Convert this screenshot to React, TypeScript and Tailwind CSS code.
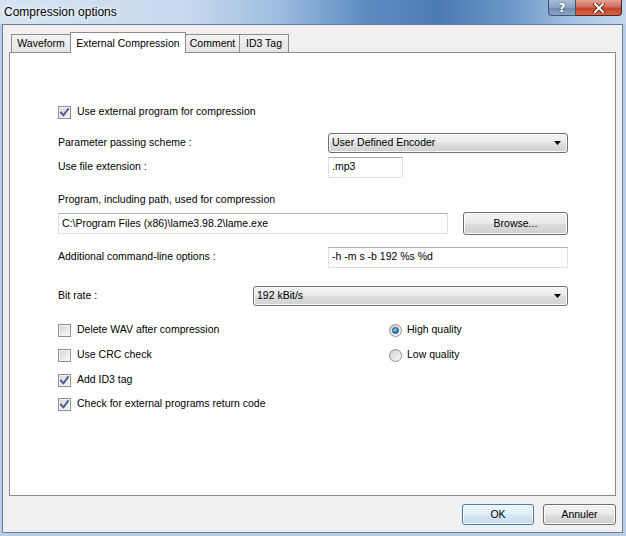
import React from "react";

const font = { fontFamily: '"Liberation Sans", Arial, sans-serif' };

function CheckBox({ checked }: { checked: boolean }) {
  return (
    <span className="w-[13px] h-[13px] shrink-0 border border-[#8e8f8f] bg-[linear-gradient(135deg,#d4d4d4,#f9f9f9)] flex items-center justify-center shadow-[inset_0_0_0_1px_#f4f4f4]">
      {checked && (
        <svg width="11" height="11" viewBox="0 0 11 11">
          <path d="M2 5.6 L4.4 8.3 L9 2.2" fill="none" stroke="#3d4f8a" strokeWidth="1.9" strokeLinecap="square" />
          <path d="M2.6 5.6 L4.4 7.6 L8.6 2.6" fill="none" stroke="#6f86c6" strokeWidth="0.6" />
        </svg>
      )}
    </span>
  );
}

function Radio({ checked }: { checked: boolean }) {
  return (
    <span className="w-[13px] h-[13px] shrink-0 rounded-full border border-[#8e8f8f] bg-[linear-gradient(135deg,#d0d0d0,#fafafa)] flex items-center justify-center">
      {checked && (
        <span className="w-[7px] h-[7px] rounded-full bg-[radial-gradient(circle_at_40%_35%,#9fe0fb,#2a85c4_55%,#174f82)] border border-[#1d4f7e]" />
      )}
    </span>
  );
}

function Select({ value, w }: { value: string; w: string }) {
  return (
    <div className={`${w} h-[20px] rounded-[3px] border border-[#707070] bg-[linear-gradient(#f3f3f3,#ebebeb_45%,#dedede_50%,#d2d2d2)] shadow-[inset_0_0_0_1px_#fbfbfb] flex items-center justify-between pl-[3px] pr-[5px]`}>
      <span>{value}</span>
      <svg width="8" height="5" viewBox="0 0 8 5">
        <path d="M0 0 H7 L3.5 4 Z" fill="#000" />
      </svg>
    </div>
  );
}

function Input({ value, w }: { value: string; w: string }) {
  return (
    <div className={`${w} h-[21px] border border-[#dbdfe6] border-t-[#abadb3] bg-white flex items-center pl-[3px]`}>
      <span>{value}</span>
    </div>
  );
}

function Button({ label, w, def }: { label: string; w: string; def?: boolean }) {
  const cls = def
    ? "border-[#3c7fb1] bg-[linear-gradient(#eef5fb,#e2eef8_48%,#d3e6f4_52%,#c7dff0)]"
    : "border-[#707070] bg-[linear-gradient(#f2f2f2,#ebebeb_48%,#dddddd_52%,#cfcfcf)]";
  return (
    <div className={`${w} rounded-[3px] border ${cls} shadow-[inset_0_0_0_1px_#fbfbfb] flex items-center justify-center text-black`}>
      {label}
    </div>
  );
}

function CheckRow({ checked, label, mt }: { checked: boolean; label: string; mt: string }) {
  return (
    <div className={`h-[22px] flex items-center gap-[6px] ${mt}`}>
      <CheckBox checked={checked} />
      <span>{label}</span>
    </div>
  );
}

function RadioRow({ checked, label, mt }: { checked: boolean; label: string; mt: string }) {
  return (
    <div className={`h-[22px] flex items-center gap-[5px] ${mt}`}>
      <Radio checked={checked} />
      <span>{label}</span>
    </div>
  );
}

export default function App() {
  return (
    <div className="w-[626px] h-[536px] overflow-hidden bg-[#b7cfea] flex flex-col text-[10.5px] text-black" style={font}>
      {/* Title bar */}
      <div className="h-[24px] shrink-0 flex items-start justify-between bg-[linear-gradient(90deg,#d6e3f2_0%,#c8d9ee_30%,#9bbbe0_45%,#5f8dc2_58%,#4b7bb3_70%,#6d98c8_82%,#a7c4e5_92%,#c2d7ee_100%)]">
        <div className="pl-[4px] pt-[3px] text-[12px] text-black [text-shadow:0_0_6px_#ffffff,0_0_3px_#ffffff]">Compression options</div>
        <div className="flex mr-[4px]">
          <div className="w-[28px] h-[16px] border border-[#3e5370] border-t-0 rounded-bl-[4px] bg-[linear-gradient(#a9bdd6,#8aa3c2_50%,#6f8bb0_51%,#8ba6c7)] flex items-center justify-center">
            <span className="text-white font-bold text-[12px] leading-none [text-shadow:0_0_2px_#1f2f45]" style={{ fontFamily: '"DejaVu Sans", sans-serif' }}>?</span>
          </div>
          <div className="w-[46px] h-[16px] border border-[#5a1f1a] border-t-0 border-l-0 rounded-br-[4px] bg-[linear-gradient(#e3a193,#d0705d_45%,#c2442b_55%,#d4664c)] flex items-center justify-center">
            <svg width="12" height="10" viewBox="0 0 12 10">
              <path d="M2 1 L10 9 M10 1 L2 9" stroke="#3a1510" strokeWidth="3.4" strokeLinecap="square" />
              <path d="M2 1 L10 9 M10 1 L2 9" stroke="#ffffff" strokeWidth="2" strokeLinecap="square" />
            </svg>
          </div>
        </div>
      </div>

      {/* Client area */}
      <div className="ml-[2px] mr-[3px] mb-[3px] flex-1 border border-[#6e7c8e] bg-[#f0f0f0] px-[6px] flex flex-col">
        {/* Tabs */}
        <div className="h-[27px] shrink-0 flex items-end pl-[2px]">
          <div className="w-[60px] h-[18px] border border-[#898c95] border-b-0 bg-[linear-gradient(#f2f2f2,#e4e4e4)] flex items-center justify-center">Waveform</div>
          <div className="relative z-10 -mb-px w-[116px] h-[21px] -ml-px border border-[#898c95] border-b-0 bg-white flex items-start pt-[3px] justify-center">External Compression</div>
          <div className="w-[55px] h-[18px] -ml-px border border-[#898c95] border-b-0 bg-[linear-gradient(#f2f2f2,#e4e4e4)] flex items-center justify-center">Comment</div>
          <div className="w-[50px] h-[18px] -ml-px border border-[#898c95] border-b-0 bg-[linear-gradient(#f2f2f2,#e4e4e4)] flex items-center justify-center">ID3 Tag</div>
        </div>

        {/* Panel */}
        <div className="h-[444px] shrink-0 border border-[#898c95] bg-white pl-[48px] pt-[48px] flex flex-col">
          <CheckRow checked label="Use external program for compression" mt="" />

          <div className="h-[22px] mt-[9px] flex items-center">
            <span className="w-[270px]">Parameter passing scheme :</span>
            <Select value="User Defined Encoder" w="w-[240px]" />
          </div>

          <div className="h-[22px] mt-[2px] flex items-center">
            <span className="w-[270px]">Use file extension :</span>
            <Input value=".mp3" w="w-[75px]" />
          </div>

          <div className="h-[22px] mt-[11px] flex items-center">
            <span>Program, including path, used for compression</span>
          </div>

          <div className="h-[23px] mt-[1px] flex items-center">
            <Input value={"C:\\Program Files (x86)\\lame3.98.2\\lame.exe"} w="w-[390px]" />
            <div className="ml-[15px] flex h-[23px]">
              <Button label="Browse..." w="w-[105px]" />
            </div>
          </div>

          <div className="h-[22px] mt-[11px] flex items-center">
            <span className="w-[270px]">Additional command-line options :</span>
            <Input value="-h -m s -b 192 %s %d" w="w-[240px]" />
          </div>

          <div className="h-[22px] mt-[17px] flex items-center">
            <span className="w-[195px]">Bit rate :</span>
            <Select value="192 kBit/s" w="w-[315px]" />
          </div>

          <div className="mt-[12px] flex">
            <div className="w-[331px] flex flex-col">
              <CheckRow checked={false} label="Delete WAV after compression" mt="" />
              <CheckRow checked={false} label="Use CRC check" mt="mt-[3px]" />
              <CheckRow checked label="Add ID3 tag" mt="mt-[3px]" />
              <CheckRow checked label="Check for external programs return code" mt="mt-[2px]" />
            </div>
            <div className="flex flex-col">
              <RadioRow checked label="High quality" mt="" />
              <RadioRow checked={false} label="Low quality" mt="mt-[3px]" />
            </div>
          </div>
        </div>

        {/* Buttons */}
        <div className="mt-[8px] flex justify-end gap-[9px]">
          <div className="flex h-[21px]"><Button label="OK" w="w-[72px]" def /></div>
          <div className="flex h-[21px]"><Button label="Annuler" w="w-[73px]" /></div>
        </div>
      </div>
    </div>
  );
}
